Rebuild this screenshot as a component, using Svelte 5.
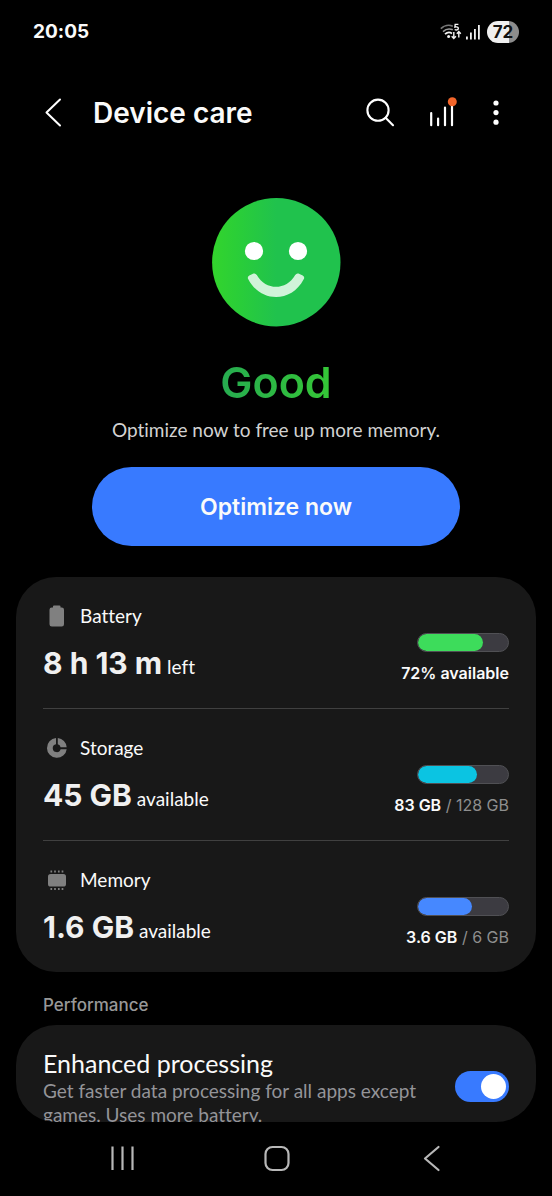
<script lang="ts">
  let enhanced = true

  const stats = [
    {
      id: "battery",
      label: "Battery",
      value: "8 h 13 m",
      unit: "left",
      percent: 72,
      color: "#3ddc5b",
      strong: "72% available",
      rest: "",
    },
    {
      id: "storage",
      label: "Storage",
      value: "45 GB",
      unit: "available",
      percent: 65,
      color: "#0bc4e2",
      strong: "83 GB",
      rest: "/ 128 GB",
    },
    {
      id: "memory",
      label: "Memory",
      value: "1.6 GB",
      unit: "available",
      percent: 60,
      color: "#4688ff",
      strong: "3.6 GB",
      rest: "/ 6 GB",
    },
  ]
</script>

<div class="screen">
  <div class="status">
    <span class="clock">20:05</span>
    <div class="indicators">
      <svg width="22" height="18" viewBox="0 0 22 18" fill="none">
        <path d="M.8 5.6C4 2.4 9 1.6 12.8 3.2" stroke="#777" stroke-width="1.6" />
        <path d="M3 8.6C6 5.8 9.6 5.4 12.8 6.8" stroke="#999" stroke-width="1.6" />
        <path d="M5 11.2C7.2 9.2 9.8 9 12 10.4" stroke="#f2f2f2" stroke-width="1.8" />
        <circle cx="8.6" cy="13.4" r="1.5" fill="#f2f2f2" />
        <path d="M18.4 1.4h-3.2l-.3 2.7c2-.5 3.6 0 3.4 1.5-.2 1.5-2.2 1.7-3.6.9" stroke="#f2f2f2" stroke-width="1.4" />
        <path d="M13.8 9v6.4m-2.1-2.2 2.1 2.2 2.1-2.2M18.8 14.6V8.6m-2 2.2 2-2.2 2 2.2" stroke="#f2f2f2" stroke-width="1.4" />
      </svg>
      <svg width="17" height="16" viewBox="0 0 17 16" fill="#f2f2f2">
        <rect x="0" y="12.5" width="1.8" height="3" />
        <rect x="4" y="8.5" width="1.8" height="7" />
        <rect x="8" y="5" width="1.8" height="10.5" />
        <rect x="12" y="1" width="1.8" height="14.5" />
      </svg>
      <span class="level">72</span>
    </div>
  </div>

  <header>
    <button aria-label="Back">
      <svg width="32" height="32" viewBox="0 0 32 32" fill="none" stroke="#fff" stroke-width="2" stroke-linecap="round" stroke-linejoin="round">
        <path d="M22 2.5 8.5 15.5 22 28.5" />
      </svg>
    </button>
    <h1>Device care</h1>
    <button aria-label="Search">
      <svg width="32" height="32" viewBox="0 0 32 32" fill="none" stroke="#fff" stroke-width="2.1" stroke-linecap="round">
        <circle cx="14" cy="13.2" r="10.6" />
        <path d="m21.6 20.8 7.4 7.4" />
      </svg>
    </button>
    <button aria-label="Usage">
      <svg width="38" height="32" viewBox="0 0 38 32" fill="none" stroke="#fff" stroke-width="2.2" stroke-linecap="round">
        <path d="M12.2 16v12.2M19.1 21.5v6.7M26 10.5v17.7M33 7v21.2" />
        <circle cx="33.3" cy="4.8" r="4.5" fill="#f2652a" stroke="none" />
      </svg>
    </button>
    <button aria-label="More options">
      <svg width="32" height="32" viewBox="0 0 32 32" fill="#fff">
        <circle cx="16" cy="6" r="2.6" />
        <circle cx="16" cy="15.6" r="2.6" />
        <circle cx="16" cy="25.2" r="2.6" />
      </svg>
    </button>
  </header>

  <main>
    <section class="summary">
      <svg width="129" height="129" viewBox="0 0 129 129">
        <defs>
          <linearGradient id="face">
            <stop offset="0" stop-color="#33d42d" />
            <stop offset="0.2" stop-color="#2ace38" />
            <stop offset="0.5" stop-color="#20c24d" />
            <stop offset="1" stop-color="#20c24d" />
          </linearGradient>
        </defs>
        <circle cx="64.3" cy="64.2" r="64.2" fill="url(#face)" />
        <circle cx="42" cy="53" r="9.1" fill="#fff" />
        <circle cx="86" cy="53" r="9.1" fill="#fff" />
        <path
          d="M36.3 81.2Q34.9 78.9 37.3 77.6L41.5 75.6Q43.5 75 44.8 77C53.9 92.8 74.1 92.8 83.2 77Q84.5 75 86.5 75.6L90.7 77.6Q93.1 78.9 91.7 81.2C79.3 105 48.7 105 36.3 81.2Z"
          fill="#d0f3d9"
        />
      </svg>
      <h2>Good</h2>
      <p>Optimize now to free up more memory.</p>
      <button class="optimize">Optimize now</button>
    </section>

    <section class="card">
      {#each stats as stat (stat.id)}
        <div class="row">
          <div>
            <div class="label">
              <svg width="28" height="28" viewBox="0 0 28 28" fill="#808080">
                {#if stat.id === "battery"}
                  <path d="M11 3.5h5.5q1 0 1 1v1h1.2q2.3 0 2.3 2.3v14.4q0 2.3-2.3 2.3H8.8q-2.3 0-2.3-2.3V7.8q0-2.3 2.3-2.3H10v-1q0-1 1-1Z" />
                {:else if stat.id === "storage"}
                  <path d="M13 4.1A9.9 9.9 0 1 0 23.7 15.2H17.6A4 4 0 1 1 13 10.2Z" />
                  <path d="M14.8 4.1A9.9 9.9 0 0 1 23.7 13.3H17.6A4 4 0 0 0 14.8 10.3Z" />
                {:else}
                  <rect x="5" y="8" width="18" height="12.5" rx="2.6" />
                  <path d="M8.3 4.5v2M12 4.5v2M15.8 4.5v2M19.5 4.5v2M8.3 22v2M12 22v2M15.8 22v2M19.5 22v2" stroke="#808080" stroke-width="1.7" />
                {/if}
              </svg>
              <span>{stat.label}</span>
            </div>
            <div class="value"><strong>{stat.value}</strong> {stat.unit}</div>
          </div>
          <div class="usage">
            <div class="bar">
              <div class="fill" style="width: {stat.percent}%; background: {stat.color}"></div>
            </div>
            <div class="amount"><strong>{stat.strong}</strong> {stat.rest}</div>
          </div>
        </div>
      {/each}
    </section>

    <h3>Performance</h3>
    <section class="card setting">
      <label for="enhanced">
        <span class="title">Enhanced processing</span>
        <span class="description">Get faster data processing for all apps except games. Uses more battery.</span>
      </label>
      <input id="enhanced" type="checkbox" role="switch" bind:checked={enhanced} />
    </section>
  </main>

  <nav>
    <button aria-label="Recents">
      <svg width="32" height="32" viewBox="0 0 32 32" stroke="#b8b8b8" stroke-width="2.2">
        <path d="M6.5 3.5v23.5M16.5 3.5v23.5M26.5 3.5v23.5" />
      </svg>
    </button>
    <button aria-label="Home">
      <svg width="32" height="32" viewBox="0 0 32 32" fill="none" stroke="#b8b8b8" stroke-width="2.2">
        <rect x="4.5" y="4" width="23" height="23" rx="7" />
      </svg>
    </button>
    <button aria-label="Back">
      <svg width="32" height="32" viewBox="0 0 32 32" fill="none" stroke="#b8b8b8" stroke-width="2.2" stroke-linecap="round" stroke-linejoin="round">
        <path d="M22.5 4 9 15.5 22.5 27" />
      </svg>
    </button>
  </nav>
</div>

<style>
  :global(body) {
    background: #000;
  }

  .screen {
    display: flex;
    flex-direction: column;
    height: 100vh;
    overflow: hidden;
    color: #fafafa;
    background: #000;
    font-family: Lato, Roboto, sans-serif;
    font-size: 19px;
    font-variant-ligatures: none;
    line-height: 24px;
  }

  h1,
  h2,
  h3,
  p {
    margin: 0;
  }

  h1,
  h2,
  h3,
  strong,
  .clock,
  .level,
  .optimize,
  .amount {
    font-family: Inter, Roboto, sans-serif;
  }

  button {
    padding: 0;
    border: 0;
    color: inherit;
    background: none;
  }

  svg {
    display: block;
    flex: none;
  }

  .status {
    display: flex;
    flex: none;
    align-items: center;
    justify-content: space-between;
    height: 64px;
    padding: 0 33px;
  }

  .clock {
    font-weight: 700;
  }

  .indicators {
    display: flex;
    align-items: center;
    gap: 4px;
  }

  .level {
    width: 32px;
    border-radius: 11px;
    color: #111;
    background: linear-gradient(90deg, #efefef 70%, #8c8c8c 70%);
    font-size: 17px;
    font-weight: 700;
    line-height: 22px;
    text-align: center;
  }

  header {
    display: flex;
    flex: none;
    align-items: center;
    gap: 23px;
    height: 98px;
    padding: 0 40px 0 38px;
  }

  h1 {
    flex: 1;
    font-size: 28px;
    font-weight: 600;
    line-height: 36px;
    white-space: nowrap;
  }

  main {
    flex: 1;
    min-height: 0;
    margin: 0 16px;
    padding-top: 36px;
    overflow: hidden;
    border-radius: 0 0 40px 40px;
  }

  .summary {
    display: flex;
    flex-direction: column;
    align-items: center;
    margin-bottom: 31px;
  }

  h2 {
    margin: 27px 0 8px;
    color: transparent;
    background: linear-gradient(90deg, #26ab50, #35c736);
    background-clip: text;
    font-size: 43px;
    font-weight: 600;
    line-height: 56px;
  }

  .summary p {
    color: #d2d2d2;
  }

  .optimize {
    width: 100%;
    max-width: 368px;
    height: 79px;
    margin-top: 25px;
    border-radius: 40px;
    background: #387aff;
    font-size: 23px;
    font-weight: 600;
  }

  .card {
    padding: 0 27px;
    border-radius: 40px;
    background: #181818;
  }

  .row {
    display: flex;
    justify-content: space-between;
    padding: 25px 0 22px;
  }

  .row + .row {
    border-top: 1px solid #404040;
  }

  .label {
    display: flex;
    align-items: center;
    gap: 9px;
    margin-bottom: 11px;
    line-height: 28px;
  }

  .value strong {
    color: #f0f0f0;
    font-size: 30px;
    font-weight: 700;
    line-height: 45px;
  }

  .usage {
    display: flex;
    flex-direction: column;
    align-items: flex-end;
    gap: 9px;
    padding-top: 31px;
  }

  .bar {
    box-sizing: border-box;
    width: 92px;
    height: 19px;
    overflow: hidden;
    border: 1px solid #505054;
    border-radius: 10px;
    background: #3c3b41;
  }

  .fill {
    height: 100%;
    border-radius: 10px;
  }

  .amount {
    color: #8e8e8e;
    font-size: 16px;
  }

  .amount strong {
    color: #fafafa;
    font-weight: 600;
  }

  h3 {
    padding: 21px 27px 8px;
    color: #989898;
    font-size: 17px;
    font-weight: 500;
  }

  .setting {
    display: flex;
    align-items: flex-start;
    justify-content: space-between;
    gap: 24px;
    padding-top: 23px;
    padding-bottom: 24px;
  }

  .title {
    display: block;
    font-size: 25px;
    line-height: 31px;
  }

  .description {
    display: block;
    color: #949498;
  }

  input {
    flex: none;
    width: 54px;
    height: 31px;
    margin: 23px 0 0;
    appearance: none;
    border-radius: 16px;
    background: #55555a;
  }

  input::before {
    display: block;
    width: 25px;
    height: 25px;
    margin: 3px;
    border-radius: 50%;
    background: #fff;
    content: "";
  }

  input:checked {
    background: #387aff;
  }

  input:checked::before {
    margin-left: auto;
  }

  nav {
    display: flex;
    flex: none;
    justify-content: space-between;
    height: 74px;
    padding: 0 104px 0 106px;
  }
</style>
